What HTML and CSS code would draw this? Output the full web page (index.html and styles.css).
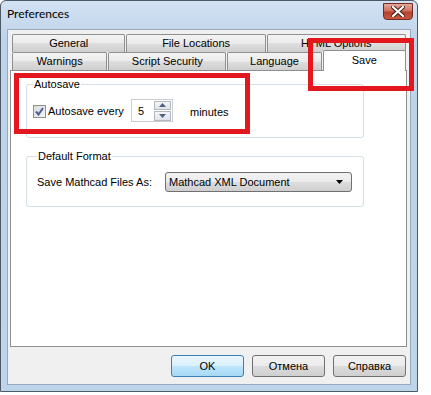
FILE: index.html
```html
<!DOCTYPE html>
<html lang="en">
<head>
  <meta charset="UTF-8" />
  <title>Preferences</title>
  <link rel="stylesheet" href="styles.css">
</head>
<body>
  <div class="window">
    <div class="titlebar">
      <span class="title">Preferences</span>
      <div class="close">
        <svg width="14" height="11" viewBox="0 0 14 11">
          <path d="M2 1 L12 10 M12 1 L2 10" stroke="#3a1a14" stroke-width="4" stroke-linecap="square"/>
          <path d="M2 1 L12 10 M12 1 L2 10" stroke="#ffffff" stroke-width="2.2" stroke-linecap="square"/>
        </svg>
      </div>
    </div>

    <div class="client">
      <div class="tabs">
        <div class="tabrow">
          <div class="tab w114">General</div>
          <div class="tab w140">File Locations</div>
          <div class="tab w140">HTML Options</div>
        </div>
        <div class="tabrow">
          <div class="tab w97">Warnings</div>
          <div class="tab w120">Script Security</div>
          <div class="tab w95">Language</div>
          <div class="tab active">Save</div>
        </div>
      </div>

      <div class="panel">
        <div class="group autosave">
          <div class="legend">Autosave</div>
          <div class="row">
            <span class="check">
              <svg width="9" height="9" viewBox="0 0 9 9"><path d="M1 4.5 L3.5 7.5 L8 1" fill="none" stroke="#4a5f97" stroke-width="2"/></svg>
            </span>
            <span class="check-label">Autosave every</span>
            <div class="spin">
              <span class="spin-value">5</span>
              <div class="spin-buttons">
                <span class="spin-btn"><svg width="7" height="4" viewBox="0 0 7 4"><path d="M0 4 L3.5 0 L7 4Z" fill="#4d6185"/></svg></span>
                <span class="spin-btn"><svg width="7" height="4" viewBox="0 0 7 4"><path d="M0 0 L3.5 4 L7 0Z" fill="#4d6185"/></svg></span>
              </div>
            </div>
            <span class="unit">minutes</span>
          </div>
        </div>

        <div class="group format">
          <div class="legend">Default Format</div>
          <div class="row">
            <span class="field-label">Save Mathcad Files As:</span>
            <div class="select">
              <span>Mathcad XML Document</span>
              <svg width="7" height="4" viewBox="0 0 7 4"><path d="M0 0 L3.5 4 L7 0Z" fill="#000"/></svg>
            </div>
          </div>
        </div>
      </div>

      <div class="buttons">
        <div class="btn default">OK</div>
        <div class="btn">Отмена</div>
        <div class="btn">Справка</div>
      </div>
    </div>

    <!-- annotation boxes drawn over the dialog -->
    <div class="mark mark-autosave"></div>
    <div class="mark mark-save"></div>
  </div>
</body>
</html>
```

FILE: styles.css
```css
* {
  box-sizing: border-box;
}

body {
  margin: 0;
  background-color: #ffffff;
  font-family: "Liberation Sans", Arial, sans-serif;
  font-size: 11px;
  color: #000;
}

.window {
  position: relative;
  width: 418px;
  height: 392px;
  border: 1px solid #4c5a68;
  border-radius: 6px 6px 0 0;
  background: linear-gradient(#d3e2f3, #bdd3ea 40px, #bed4eb);
  padding: 0 6px 6px 6px;
  display: flex;
  flex-direction: column;
}

.titlebar {
  height: 28px;
  display: flex;
  align-items: center;
  justify-content: space-between;
  padding: 0 0 2px 0;
}

.title {
  font-family: Lato, "Liberation Sans", sans-serif;
  font-size: 12px;
  color: #000;
  margin-top: -2px;
}

.close {
  width: 30px;
  height: 17px;
  margin-top: -6px;
  margin-right: -2px;
  border: 1px solid #6d2c26;
  border-radius: 0 0 4px 4px;
  background: linear-gradient(#e6a79a, #d2705e 45%, #b8422d 55%, #c8583f);
  display: flex;
  align-items: center;
  justify-content: center;
}

.client {
  flex: 1;
  background-color: #f0f0f0;
  border: 1px solid #98a9bd;
  padding: 4px 3px 0 2px;
  display: flex;
  flex-direction: column;
}

.tabs {
  padding-left: 2px;
  display: flex;
  flex-direction: column;
}

.tabrow {
  display: flex;
  height: 18px;
}

.tab {
  height: 18px;
  line-height: 17px;
  text-align: center;
  border: 1px solid #8e8f8f;
  border-bottom: none;
  margin-right: 1px;
  border-radius: 2px 2px 0 0;
  background: linear-gradient(#f3f3f3, #ebebeb 50%, #dedede 50%, #cfcfcf);
}

.w114 { width: 114px; }
.w140 { width: 140px; }
.w97 { width: 96px; }
.w120 { width: 119px; }
.w95 { width: 95px; }

.tab.active {
  width: 84px;
  height: 21px;
  margin-top: -2px;
  background: #ffffff;
  line-height: 18px;
  position: relative;
  z-index: 1;
}

.panel {
  height: 277px;
  background: #ffffff;
  border: 1px solid #8e8f8f;
  padding: 7px 42px 0 15px;
}

.group {
  border: 1px solid #d5dfe5;
  border-radius: 3px;
  padding: 0 0 0 6px;
}

.legend {
  display: inline-block;
  background: #ffffff;
  padding: 0 1px;
  margin-top: -7px;
  line-height: 13px;
  vertical-align: top;
}

.autosave {
  height: 54px;
  margin-top: 6px;
}

.autosave .row {
  display: flex;
  align-items: center;
  margin-top: 2px;
  height: 23px;
}

.check {
  width: 13px;
  height: 13px;
  border: 1px solid #8f8f8f;
  background: linear-gradient(135deg, #d9dcdf, #f4f4f4);
  display: flex;
  align-items: center;
  justify-content: center;
  margin-top: 1px;
}

.check-label {
  margin-left: 2px;
  width: 83px;
}

.spin {
  width: 42px;
  height: 23px;
  border: 1px solid #c9cdd3;
  background: #fff;
  display: flex;
  justify-content: space-between;
  align-items: center;
  padding: 1px;
}

.spin-value {
  padding-left: 5px;
}

.spin-buttons {
  width: 17px;
  height: 20px;
  display: flex;
  flex-direction: column;
  gap: 1px;
}

.spin-btn {
  flex: 1;
  border: 1px solid #b3b7bd;
  background: linear-gradient(#f4f5f7, #dfe3e8);
  display: flex;
  align-items: center;
  justify-content: center;
}

.unit {
  margin-left: 17px;
  margin-top: 2px;
}

.format {
  height: 51px;
  margin-top: 18px;
  padding-left: 10px;
  padding-right: 11px;
}

.format .row {
  display: flex;
  align-items: center;
  justify-content: space-between;
  margin-top: 3px;
}

.select {
  width: 187px;
  height: 20px;
  border: 1px solid #707070;
  border-radius: 3px;
  background: linear-gradient(#f2f2f2, #ebebeb 50%, #dddddd 50%, #cfcfcf);
  display: flex;
  align-items: center;
  justify-content: space-between;
  padding: 0 8px 0 3px;
}

.buttons {
  display: flex;
  justify-content: flex-end;
  gap: 8px;
  margin-top: 8px;
  padding-right: 1px;
}

.btn {
  width: 73px;
  height: 22px;
  line-height: 20px;
  text-align: center;
  border: 1px solid #707070;
  border-radius: 3px;
  background: linear-gradient(#f2f2f2, #ebebeb 50%, #dddddd 50%, #cfcfcf);
}

.btn.default {
  border-color: #3c7fb1;
  background: linear-gradient(#eaf6fd, #d9f0fc 50%, #bee6fd 50%, #a7d9f5);
}

.mark {
  position: absolute;
  border: 5px solid #e3181f;
  z-index: 2;
}

.mark-autosave {
  left: 13px;
  top: 72px;
  width: 236px;
  height: 61px;
}

.mark-save {
  left: 307px;
  top: 37px;
  width: 106px;
  height: 53px;
}
```
